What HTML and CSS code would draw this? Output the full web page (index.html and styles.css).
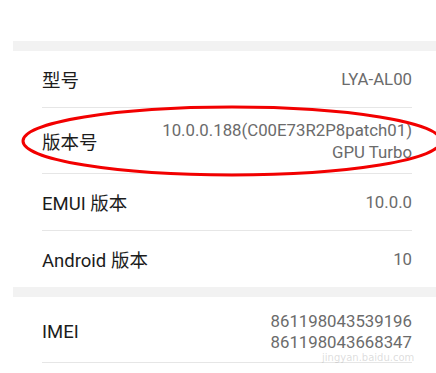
FILE: index.html
```html
<!DOCTYPE html>
<html lang="zh-CN">
<head>
<meta charset="utf-8">
<link rel="stylesheet" href="styles.css">
</head>
<body>
<div class="page">
  <div class="band"></div>
  <div class="group">
    <div class="row">
      <div class="label">型号</div>
      <div class="value">LYA-AL00</div>
    </div>
    <div class="row tall">
      <div class="label">版本号</div>
      <div class="value">10.0.0.188(C00E73R2P8patch01)<br>GPU Turbo</div>
    </div>
    <div class="row">
      <div class="label">EMUI 版本</div>
      <div class="value">10.0.0</div>
    </div>
    <div class="row last">
      <div class="label">Android 版本</div>
      <div class="value">10</div>
    </div>
  </div>
  <div class="band"></div>
  <div class="group">
    <div class="row imei">
      <div class="label">IMEI</div>
      <div class="value">861198043539196<br>861198043668347</div>
    </div>
  </div>
  <svg class="mark" width="436" height="373" viewBox="0 0 436 373">
    <ellipse cx="232" cy="141" rx="209" ry="34" fill="none" stroke="#f20000" stroke-width="3"/>
  </svg>
  <div class="watermark">jingyan.baidu.com</div>
</div>
</body>
</html>
```
FILE: styles.css
```css
html, body {
  margin: 0;
  padding: 0;
  background: #ffffff;
}
body {
  width: 436px;
  height: 373px;
  overflow: hidden;
}
.page {
  position: relative;
  padding-top: 41px;
  padding-left: 13px;
  font-family: Roboto, "Noto Sans CJK SC", sans-serif;
}
.band {
  height: 10px;
  background: #f2f2f2;
}
.group {
  padding: 0 24px 0 29px;
}
.row {
  display: flex;
  align-items: center;
  justify-content: space-between;
  min-height: 57px;
  padding: 10px 0;
  box-sizing: border-box;
  border-bottom: 1px solid #e6e6e6;
}
.row.tall {
  padding: 11px 0 10px;
}
.row.last {
  border-bottom: none;
  min-height: 56px;
}
.label {
  font-size: 18.5px;
  color: #1c1c1c;
  white-space: nowrap;
}
.value {
  font-size: 16.8px;
  line-height: 22px;
  color: #6b6b6b;
  text-align: right;
  white-space: nowrap;
}
.imei {
  min-height: 66px;
  padding: 13px 0 9px;
}
.imei .value {
  line-height: 21px;
}
.mark {
  position: absolute;
  left: 0;
  top: 0;
}
.watermark {
  position: absolute;
  left: 322px;
  top: 352px;
  font-size: 10px;
  line-height: 11px;
  color: rgba(170, 170, 170, 0.4);
  font-family: "DejaVu Sans", sans-serif;
}
```
